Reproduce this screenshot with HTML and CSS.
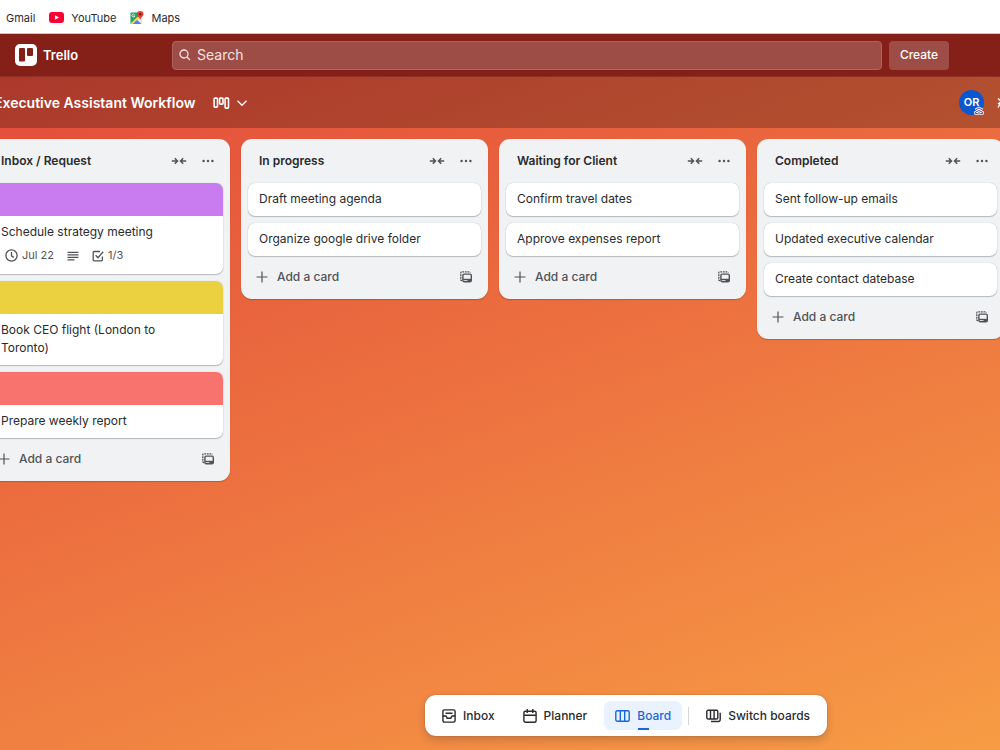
FILE: index.html
```html
<!DOCTYPE html>
<html lang="en">
<head>
    <meta charset="UTF-8">
    <title>Executive Assistant Workflow | Trello</title>
    <link rel="stylesheet" href="styles.css">
</head>
<body>
    <!-- shared icons -->
    <svg class="sprite" aria-hidden="true">
        <symbol id="i-collapse" viewBox="0 0 16 12">
            <path d="M0.8 6H6M3.8 3.3L6.5 6L3.8 8.7M15.2 6H10M12.2 3.3L9.5 6L12.2 8.7" fill="none" stroke="currentColor" stroke-width="1.5"/>
        </symbol>
        <symbol id="i-more" viewBox="0 0 12 12">
            <circle cx="1.6" cy="6" r="1.2"/><circle cx="6" cy="6" r="1.2"/><circle cx="10.4" cy="6" r="1.2"/>
        </symbol>
        <symbol id="i-plus" viewBox="0 0 12 12">
            <path d="M6 .5V11.5M.5 6H11.5" fill="none" stroke="currentColor" stroke-width="1.2"/>
        </symbol>
        <symbol id="i-template" viewBox="0 0 12 12">
            <path d="M2 9.6H1.6Q.8 9.6 .8 8.8V1.8Q.8 .9 1.7 .9H9.4Q10.2 .9 10.2 1.6" fill="none" stroke="currentColor" stroke-width="1.3" stroke-dasharray="1.8 .8"/>
            <rect x="2.9" y="3.1" width="8.4" height="7.6" rx="1.3" fill="none" stroke="currentColor" stroke-width="1.4"/>
            <path d="M3 7.8H11.2V9.2H3Z"/>
            <path d="M7.5 8H11V10.5H7.5Z"/>
        </symbol>
    </svg>

    <nav class="bookmarks">
        <a href="#">Gmail</a>
        <a href="#">
            <svg width="15" height="11" viewBox="0 0 15 11"><rect width="15" height="11" rx="3" fill="#ff0033"/><path d="M6 3.2V7.8L10 5.5Z" fill="#fff"/></svg>
            YouTube
        </a>
        <a href="#">
            <svg width="14" height="14" viewBox="0 0 14 14">
                <rect x="0.5" y="1.5" width="11.5" height="11.5" rx="1" fill="#e8eaed"/>
                <path d="M.5 2.5Q.5 1.5 1.5 1.5H8L9.5 5L1 13Q.5 13 .5 12Z" fill="#20a464"/>
                <path d="M7.8 5.5L9.6 7.3L3.6 13H1Q.5 12.8 .5 12.4Z" fill="#ffd04b"/>
                <path d="M7 9L11.5 13H2.8Z" fill="#4285f4"/>
                <path d="M4.6 3.6A1.5 1.5 0 1 0 4.9 4.9H3.6" fill="none" stroke="#fff" stroke-width=".8"/>
                <path d="M10.2 0A3.3 3.3 0 0 1 13.5 3.3C13.5 5.5 10.8 6 10.2 9.2C9.6 6 6.9 5.5 6.9 3.3A3.3 3.3 0 0 1 10.2 0Z" fill="#ea4335"/>
                <circle cx="10.2" cy="3.3" r="1.2" fill="#811411"/>
            </svg>
            Maps
        </a>
    </nav>

    <div class="app">
        <header class="top-bar">
            <a class="logo" href="#">
                <svg width="22" height="22" viewBox="0 0 22 22">
                    <rect width="22" height="22" rx="5" fill="#fff"/>
                    <rect x="4" y="4" width="6" height="13.5" rx="1" fill="#842018"/>
                    <rect x="12" y="4" width="6" height="8" rx="1" fill="#842018"/>
                </svg>
                Trello
            </a>
            <label class="search">
                <svg width="12" height="12" viewBox="0 0 12 12" fill="none" stroke="currentColor" stroke-width="1.3"><circle cx="5" cy="5" r="4"/><path d="M8 8L11 11"/></svg>
                <input type="text" placeholder="Search" aria-label="Search">
            </label>
            <button class="create">Create</button>
        </header>

        <div class="board-bar">
            <h1>Executive Assistant Workflow</h1>
            <button class="view" aria-label="Views">
                <svg width="17" height="12" viewBox="0 0 17 12" fill="none" stroke="currentColor" stroke-width="1.6">
                    <rect x="1.1" y="1.1" width="3.4" height="9" rx=".8"/>
                    <rect x="6.6" y="1.1" width="3.4" height="6" rx=".8"/>
                    <rect x="12.1" y="1.1" width="3.4" height="10" rx=".8"/>
                </svg>
                <svg width="12" height="12" viewBox="0 0 12 12" fill="none" stroke="currentColor" stroke-width="1.4"><path d="M1.5 3.7L6 8.2L10.5 3.7"/></svg>
            </button>
            <div class="member">
                OR
                <svg class="rank" width="10" height="9" viewBox="0 0 10 9" fill="none" stroke-linejoin="round">
                    <path d="M1.5 4L5 2L8.5 4M1.5 7.5V6.2L5 4.5L8.5 6.2V7.5H6.5L5 6.7L3.5 7.5Z" stroke="#fff" stroke-width="2.6"/>
                    <path d="M1.5 4L5 2L8.5 4M1.5 7.5V6.2L5 4.5L8.5 6.2V7.5H6.5L5 6.7L3.5 7.5Z" stroke="#352c9c" stroke-width=".9"/>
                </svg>
            </div>
            <button class="power" aria-label="Automation">
                <svg width="13" height="12" viewBox="0 0 13 12" fill="none" stroke="currentColor" stroke-width="1.4"><path d="M1 1.5L4.5 4.5L1 7M5 1L4 5.5L1 10.5M4 5.5L8 11"/></svg>
            </button>
        </div>

        <main class="lists">
            <section class="list">
                <div class="list-head">
                    <h2>Inbox / Request</h2>
                    <button aria-label="Collapse list"><svg width="16" height="12"><use href="#i-collapse"/></svg></button>
                    <button aria-label="List actions"><svg width="12" height="12"><use href="#i-more"/></svg></button>
                </div>
                <div class="cards">
                    <article class="card">
                        <div class="cover purple"></div>
                        <p>Schedule strategy meeting</p>
                        <div class="badges">
                            <span><svg width="13" height="13" viewBox="0 0 13 13" fill="none" stroke="currentColor" stroke-width="1.3"><circle cx="6.5" cy="6.5" r="5.6"/><path d="M6.5 3V6.8L8.7 8.4"/></svg>Jul 22</span>
                            <span><svg width="12" height="12" viewBox="0 0 12 12" fill="none" stroke="currentColor" stroke-width="1.2"><path d="M.5 2.3H11.5M.5 4.8H11.5M.5 7.3H11.5M.5 9.8H7.5"/></svg></span>
                            <span><svg width="12" height="12" viewBox="0 0 12 12" fill="none" stroke="currentColor" stroke-width="1.3"><path d="M8 1.5H2.3Q1.2 1.5 1.2 2.5V9.7Q1.2 10.8 2.3 10.8H9.3Q10.4 10.8 10.4 9.7V6.5M3.6 5.2L6 7.7L11.2 1.8"/></svg>1/3</span>
                        </div>
                    </article>
                    <article class="card">
                        <div class="cover yellow"></div>
                        <p>Book CEO flight (London to Toronto)</p>
                    </article>
                    <article class="card">
                        <div class="cover red"></div>
                        <p>Prepare weekly report</p>
                    </article>
                </div>
                <div class="list-foot">
                    <button class="add"><svg width="12" height="12"><use href="#i-plus"/></svg>Add a card</button>
                    <button aria-label="Create from template"><svg width="12" height="12"><use href="#i-template"/></svg></button>
                </div>
            </section>

            <section class="list">
                <div class="list-head">
                    <h2>In progress</h2>
                    <button aria-label="Collapse list"><svg width="16" height="12"><use href="#i-collapse"/></svg></button>
                    <button aria-label="List actions"><svg width="12" height="12"><use href="#i-more"/></svg></button>
                </div>
                <div class="cards">
                    <article class="card"><p>Draft meeting agenda</p></article>
                    <article class="card"><p>Organize google drive folder</p></article>
                </div>
                <div class="list-foot">
                    <button class="add"><svg width="12" height="12"><use href="#i-plus"/></svg>Add a card</button>
                    <button aria-label="Create from template"><svg width="12" height="12"><use href="#i-template"/></svg></button>
                </div>
            </section>

            <section class="list">
                <div class="list-head">
                    <h2>Waiting for Client</h2>
                    <button aria-label="Collapse list"><svg width="16" height="12"><use href="#i-collapse"/></svg></button>
                    <button aria-label="List actions"><svg width="12" height="12"><use href="#i-more"/></svg></button>
                </div>
                <div class="cards">
                    <article class="card"><p>Confirm travel dates</p></article>
                    <article class="card"><p>Approve expenses report</p></article>
                </div>
                <div class="list-foot">
                    <button class="add"><svg width="12" height="12"><use href="#i-plus"/></svg>Add a card</button>
                    <button aria-label="Create from template"><svg width="12" height="12"><use href="#i-template"/></svg></button>
                </div>
            </section>

            <section class="list">
                <div class="list-head">
                    <h2>Completed</h2>
                    <button aria-label="Collapse list"><svg width="16" height="12"><use href="#i-collapse"/></svg></button>
                    <button aria-label="List actions"><svg width="12" height="12"><use href="#i-more"/></svg></button>
                </div>
                <div class="cards">
                    <article class="card"><p>Sent follow-up emails</p></article>
                    <article class="card"><p>Updated executive calendar</p></article>
                    <article class="card"><p>Create contact datebase</p></article>
                </div>
                <div class="list-foot">
                    <button class="add"><svg width="12" height="12"><use href="#i-plus"/></svg>Add a card</button>
                    <button aria-label="Create from template"><svg width="12" height="12"><use href="#i-template"/></svg></button>
                </div>
            </section>
        </main>

        <nav class="dock">
            <button>
                <svg width="14" height="14" viewBox="0 0 14 14" fill="none" stroke="currentColor" stroke-width="1.4"><rect x=".9" y=".9" width="12.2" height="12.2" rx="1.5"/><path d="M3.5 4.3H10.5M1 7H4L5.2 9.2H8.8L10 7H13"/></svg>
                Inbox
            </button>
            <button>
                <svg width="14" height="14" viewBox="0 0 14 14" fill="none" stroke="currentColor" stroke-width="1.4"><rect x=".9" y="2.2" width="12.2" height="11" rx="1.5"/><path d="M1 6.2H13M4.2 0V4M9.8 0V4"/></svg>
                Planner
            </button>
            <button class="active">
                <svg width="15" height="12" viewBox="0 0 15 12" fill="none" stroke="currentColor" stroke-width="1.4"><rect x=".8" y=".8" width="13.4" height="10.4" rx="1.5"/><path d="M5.3 1V11M9.7 1V11"/></svg>
                Board
            </button>
            <span class="divider"></span>
            <button>
                <svg width="15" height="14" viewBox="0 0 15 14" fill="none" stroke="currentColor" stroke-width="1.4"><rect x=".8" y="1.3" width="11" height="8.7" rx="1.3"/><path d="M4.5 1.5V10M8.1 1.5V10M14.2 3.8V10.6Q14.2 12.5 12.3 12.5H5"/></svg>
                Switch boards
            </button>
        </nav>
    </div>
</body>
</html>
```
FILE: styles.css
```css
*{
    margin: 0;
    padding: 0;
    box-sizing: border-box;
}
body{
    display: flex;
    flex-direction: column;
    height: 100vh;
    overflow: hidden;
    font-family: Inter, "Liberation Sans", sans-serif;
    font-size: 12px;
    line-height: 18px;
    color: #292a2e;
}
a{
    color: inherit;
    text-decoration: none;
}
button{
    display: flex;
    align-items: center;
    border: 0;
    background: none;
    font: inherit;
    color: inherit;
    cursor: pointer;
}
svg{
    display: block;
    flex-shrink: 0;
}
.sprite{
    position: absolute;
    width: 0;
    height: 0;
}
.bookmarks{
    display: flex;
    gap: 14px;
    height: 34px;
    padding: 2px 6px 0;
    background: #fff;
    border-bottom: 1px solid #c9c9c9;
    font-size: 11px;
}
.bookmarks a{
    display: flex;
    align-items: center;
    gap: 7px;
}
.app{
    flex: 1;
    display: flex;
    flex-direction: column;
    position: relative;
    background: linear-gradient(160deg, #e2483a 0%, #f79c45 100%);
}
/* top bar */
.top-bar{
    display: flex;
    align-items: center;
    gap: 7px;
    height: 43px;
    padding: 0 51px 0 15px;
    background: #842018;
    border-bottom: 1px solid #8f2f26;
    color: #fff;
}
.logo{
    display: flex;
    align-items: center;
    gap: 6px;
    width: 150px;
    font-size: 13px;
    font-weight: 600;
}
.search{
    flex: 1;
    display: flex;
    align-items: center;
    gap: 6px;
    height: 29px;
    padding: 0 6px;
    border: 1px solid #b0645f;
    border-radius: 4px;
    background: #9d4c46;
    color: #f5e4e2;
}
.search input{
    flex: 1;
    border: 0;
    outline: 0;
    background: none;
    font: inherit;
    font-size: 14px;
    color: #fff;
}
.search input::placeholder{
    color: #f5e4e2;
}
.create{
    justify-content: center;
    min-width: 60px;
    height: 29px;
    padding: 0 10px;
    border-radius: 4px;
    background: #9d4c46;
    font-weight: 500;
}
/* board header */
.board-bar{
    display: flex;
    align-items: center;
    height: 51px;
    margin-left: -6px;
    background: rgba(0,0,0,0.24);
    color: #fff;
}
.board-bar h1{
    font-size: 14px;
    font-weight: 600;
}
.view{
    gap: 6px;
    margin-left: 18px;
}
.member{
    position: relative;
    width: 25px;
    height: 25px;
    margin-left: auto;
    border-radius: 50%;
    background: #0b57d0;
    font-size: 11px;
    font-weight: 600;
    line-height: 25px;
    text-align: center;
}
.rank{
    position: absolute;/*badge over the avatar*/
    right: 0;
    bottom: 0;
}
.power{
    margin: 0 -10px 0 13px;
}
/* lists */
.lists{
    display: flex;
    align-items: flex-start;
    gap: 11px;
    margin-left: -17px;/*board is scrolled a little*/
    padding-top: 11px;
}
.list{
    flex: 0 0 247px;
    padding: 0 7px 8px;
    border-radius: 11px;
    background: #f1f2f4;
    box-shadow: 0 1px 1px rgba(30,31,33,0.25);
}
.list-head{
    display: flex;
    align-items: center;
    gap: 15px;
    height: 44px;
    padding: 0 9px 0 11px;
}
.list-head h2{
    flex: 1;
    font-size: 12px;
    font-weight: 600;
}
.list-head button,.list-foot button{
    color: #505258;
    fill: currentColor;
}
.cards{
    display: flex;
    flex-direction: column;
    gap: 7px;
}
.card{
    overflow: hidden;
    border-radius: 7px;
    background: #fff;
    box-shadow: 0 1px 1px rgba(30,31,33,0.25), 0 0 1px rgba(30,31,33,0.31);
}
.card p{
    padding: 7px 11px 8px;
}
/* narrower text column on the cards with a cover */
.cover + p{
    padding-right: 50px;
}
.cover{
    height: 33px;
}
.purple{
    background: #c97cf0;
}
.yellow{
    background: #ebd03f;
}
.red{
    background: #f8736d;
}
.badges{
    display: flex;
    gap: 13px;
    padding: 0 15px 12px;
    font-size: 11px;
    line-height: 13px;
    color: #505258;
}
.badges span{
    display: flex;
    align-items: center;
    gap: 4px;
}
.list-foot{
    display: flex;
    justify-content: space-between;
    height: 29px;
    margin-top: 6px;
    padding: 0 9px 0 8px;
}
.add{
    gap: 9px;
    font-weight: 500;
}
/* bottom switcher */
.dock{
    position: absolute;/*floats over the board*/
    left: 50%;
    bottom: 14px;
    display: flex;
    align-items: center;
    gap: 6px;
    height: 41px;
    margin-left: -75px;
    padding: 0 6px;
    border-radius: 11px;
    background: #fff;
    box-shadow: 0 4px 8px rgba(30,31,33,0.2), 0 0 1px rgba(30,31,33,0.5);
    font-weight: 500;
    white-space: nowrap;
}
.dock button{
    gap: 7px;
    height: 29px;
    padding: 0 11px;
    border-radius: 7px;
}
.dock .active{
    position: relative;
    background: #e9f2fe;
    color: #1868db;
}
.dock .active::after{
    content: "";
    position: absolute;/*underline of the current tab*/
    left: 50%;
    bottom: 0;
    width: 11px;
    height: 2px;
    margin-left: -5px;
    background: #1868db;
}
.divider{
    width: 1px;
    height: 18px;
    background: #d5d7db;
}
```
